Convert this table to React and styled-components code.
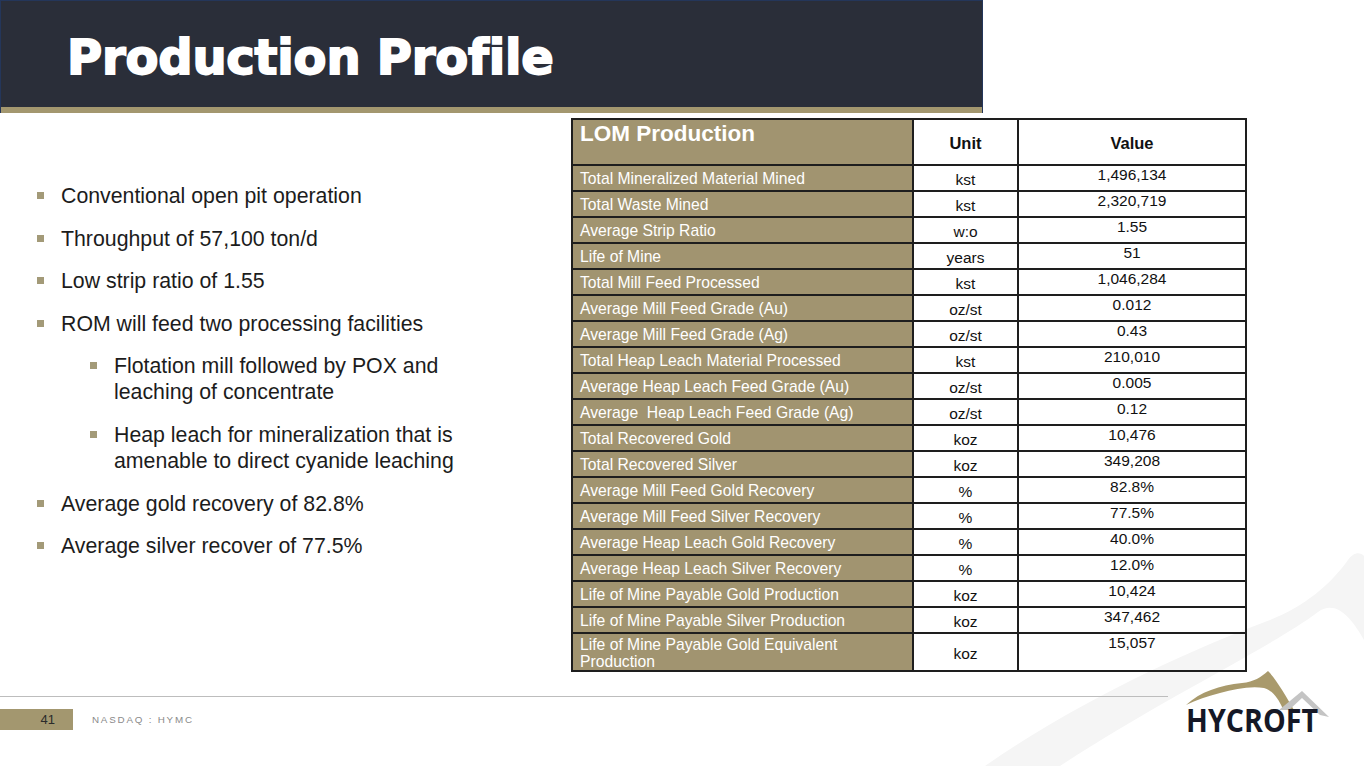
import React from "react";
import styled, { createGlobalStyle } from "styled-components";

const GOLD = "#a3976f";
const CELL_GOLD = "#a19470";

const Global = createGlobalStyle`
  html, body { margin: 0; padding: 0; background: #fff; }
  body { font-family: "Liberation Sans", Arial, sans-serif; overflow: hidden; }
`;

const Page = styled.div`
  position: relative;
  width: 1364px;
  height: 766px;
  overflow: hidden;
  display: flex;
  flex-direction: column;
  background: #fff;
`;

const BgArt = styled.svg`
  position: absolute;
  left: 0;
  top: 0;
  width: 1364px;
  height: 766px;
  pointer-events: none;
  z-index: 0;
`;

const Header = styled.header`
  position: relative;
  z-index: 1;
  width: 983px;
  height: 113px;
  box-sizing: border-box;
  border: 1px solid #24365a;
  border-bottom: none;
  background: #2a2e39;
  display: flex;
  flex-direction: column;
`;

const TitleBar = styled.div`
  flex: 1;
  display: flex;
  align-items: center;
  padding-left: 66px;
  padding-top: 6px;
`;

const Title = styled.h1`
  margin: 0;
  color: #fff;
  font-family: "DejaVu Sans", "Liberation Sans", sans-serif;
  font-weight: 700;
  font-size: 48px;
  letter-spacing: -0.2px;
  -webkit-text-stroke: 1.8px #fff;
  line-height: 1;
`;

const GoldStripe = styled.div`
  height: 6px;
  background: ${GOLD};
`;

const Main = styled.main`
  position: relative;
  z-index: 1;
  display: flex;
  height: 552px;
  margin-top: 5px;
`;

const Bullets = styled.ul`
  list-style: none;
  margin: 0;
  padding: 65px 0 0 37px;
  width: 571px;
  box-sizing: border-box;
  display: flex;
  flex-direction: column;
  gap: 16.6px;
`;

const Item = styled.li`
  display: flex;
  align-items: flex-start;
  padding-left: ${(p) => (p.$sub ? 53 : 0)}px;
  font-size: 21.3px;
  line-height: 26px;
  color: #1c1c1c;
`;

const Square = styled.span`
  flex: none;
  width: 7px;
  height: 7px;
  margin-top: 9px;
  margin-right: 17px;
  background: #a39a78;
`;

const ItemText = styled.span`
  max-width: ${(p) => (p.$sub ? 345 : 480)}px;
`;

const Table = styled.table`
  border-collapse: collapse;
  width: 674px;
  height: 552px;
  table-layout: fixed;
  border: 2px solid #1e1e1e;
  align-self: flex-start;
`;

const Row = styled.tr`
  height: ${(p) => p.$h}px;
`;

const LabelCell = styled.td`
  background: ${CELL_GOLD};
  color: #fff;
  font-size: 15.7px;
  line-height: ${(p) => (p.$wrap ? 17 : 18)}px;
  padding: ${(p) => (p.$wrap ? 1 : 2)}px 70px 0 7px;
  border: 2px solid #1e1e1e;
  vertical-align: middle;
  white-space: ${(p) => (p.$wrap ? "normal" : "nowrap")};
`;

const HeadLabel = styled(LabelCell)`
  font-size: 22.5px;
  font-weight: 700;
  vertical-align: top;
  padding-top: 5px;
`;

const UnitCell = styled.td`
  color: #111;
  font-size: 15.5px;
  line-height: 18px;
  text-align: center;
  padding: 4px 0 0;
  border: 2px solid #1e1e1e;
  vertical-align: middle;
`;

const ValueCell = styled.td`
  color: #111;
  font-size: 15.5px;
  line-height: 18px;
  text-align: center;
  padding: 0;
  border: 2px solid #1e1e1e;
  vertical-align: top;
`;

const HeadCell = styled.td`
  color: #111;
  font-size: 16.5px;
  font-weight: 700;
  text-align: center;
  padding-top: 4px;
  border: 2px solid #1e1e1e;
  vertical-align: middle;
`;

const Footer = styled.footer`
  position: relative;
  z-index: 1;
  flex: 1;
  display: flex;
`;

const FooterLeft = styled.div`
  width: 1168px;
  padding-top: 26px;
  display: flex;
  flex-direction: column;
`;

const Rule = styled.div`
  height: 1px;
  background: #bdbdbd;
`;

const PageRow = styled.div`
  margin-top: 12px;
  display: flex;
  align-items: center;
`;

const PageNum = styled.div`
  width: 73px;
  height: 21px;
  background: ${GOLD};
  color: #2b2b2b;
  font-size: 13px;
  line-height: 21px;
  text-align: right;
  padding-right: 18px;
  box-sizing: border-box;
`;

const Ticker = styled.div`
  margin-left: 19px;
  font-size: 9.8px;
  letter-spacing: 1.8px;
  color: #8a8a8a;
`;

const Logo = styled.svg`
  margin-left: 12px;
  width: 160px;
  height: 72px;
  flex: none;
`;

const rows = [
  ["Total Mineralized Material Mined", "kst", "1,496,134"],
  ["Total Waste Mined", "kst", "2,320,719"],
  ["Average Strip Ratio", "w:o", "1.55"],
  ["Life of Mine", "years", "51"],
  ["Total Mill Feed Processed", "kst", "1,046,284"],
  ["Average Mill Feed Grade (Au)", "oz/st", "0.012"],
  ["Average Mill Feed Grade (Ag)", "oz/st", "0.43"],
  ["Total Heap Leach Material Processed", "kst", "210,010"],
  ["Average Heap Leach Feed Grade (Au)", "oz/st", "0.005"],
  ["Average\u00a0 Heap Leach Feed Grade (Ag)", "oz/st", "0.12"],
  ["Total Recovered Gold", "koz", "10,476"],
  ["Total Recovered Silver", "koz", "349,208"],
  ["Average Mill Feed Gold Recovery", "%", "82.8%"],
  ["Average Mill Feed Silver Recovery", "%", "77.5%"],
  ["Average Heap Leach Gold Recovery", "%", "40.0%"],
  ["Average Heap Leach Silver Recovery", "%", "12.0%"],
  ["Life of Mine Payable Gold Production", "koz", "10,424"],
  ["Life of Mine Payable Silver Production", "koz", "347,462"],
  ["Life of Mine Payable Gold Equivalent Production", "koz", "15,057"],
];

const bullets = [
  { t: "Conventional open pit operation" },
  { t: "Throughput of 57,100 ton/d" },
  { t: "Low strip ratio of 1.55" },
  { t: "ROM will feed two processing facilities" },
  { t: "Flotation mill followed by POX and leaching of concentrate", sub: true },
  { t: "Heap leach for mineralization that is amenable to direct cyanide leaching", sub: true },
  { t: "Average gold recovery of 82.8%" },
  { t: "Average silver recover of 77.5%" },
];

export default function App() {
  return (
    <>
      <Global />
      <Page>
        <BgArt viewBox="0 0 1364 766">
          <path
            d="M985 766 C1080 700 1190 650 1270 620 C1305 606 1330 585 1348 560 C1354 552 1360 552 1364 556 L1364 640 C1350 615 1335 600 1318 612 C1270 648 1160 700 1060 766 Z"
            fill="#f5f5f5"
          />
        </BgArt>
        <Header>
          <TitleBar>
            <Title>Production Profile</Title>
          </TitleBar>
          <GoldStripe />
        </Header>
        <Main>
          <Bullets>
            {bullets.map((b, i) => (
              <Item key={i} $sub={b.sub}>
                <Square />
                <ItemText $sub={b.sub}>{b.t}</ItemText>
              </Item>
            ))}
          </Bullets>
          <Table>
            <colgroup>
              <col style={{ width: "341px" }} />
              <col style={{ width: "105px" }} />
              <col style={{ width: "228px" }} />
            </colgroup>
            <tbody>
              <Row $h={46}>
                <HeadLabel>LOM Production</HeadLabel>
                <HeadCell>Unit</HeadCell>
                <HeadCell>Value</HeadCell>
              </Row>
              {rows.map((r, i) => {
                const last = i === rows.length - 1;
                return (
                  <Row key={i} $h={last ? 38 : 26}>
                    <LabelCell $wrap={last}>{r[0]}</LabelCell>
                    <UnitCell>{r[1]}</UnitCell>
                    <ValueCell>{r[2]}</ValueCell>
                  </Row>
                );
              })}
            </tbody>
          </Table>
        </Main>
        <Footer>
          <FooterLeft>
            <Rule />
            <PageRow>
              <PageNum>41</PageNum>
              <Ticker>NASDAQ : HYMC</Ticker>
            </PageRow>
          </FooterLeft>
          <Logo viewBox="0 0 160 72">
            <path
              d="M6 35 C20 22 40 15 62 13 C74 12 81 7 88 1 C97 10 107 28 114 40 L103 39 C98 28 92 20 84 18 C70 16 55 19 40 23 C28 26 16 30 6 35 Z"
              fill="#a99a6c"
            />
            <path d="M99 40 L122 21 L149 47 L140 45 L122 28 L109 40 Z" fill="#c4c4c4" />
            <text
              x="6"
              y="62"
              textLength="132"
              lengthAdjust="spacingAndGlyphs"
              fontFamily="'Open Sans', 'Noto Sans', sans-serif"
              fontWeight="700"
              fontSize="33"
              fill="#151826"
            >
              HYCROFT
            </text>
          </Logo>
        </Footer>
      </Page>
    </>
  );
}
